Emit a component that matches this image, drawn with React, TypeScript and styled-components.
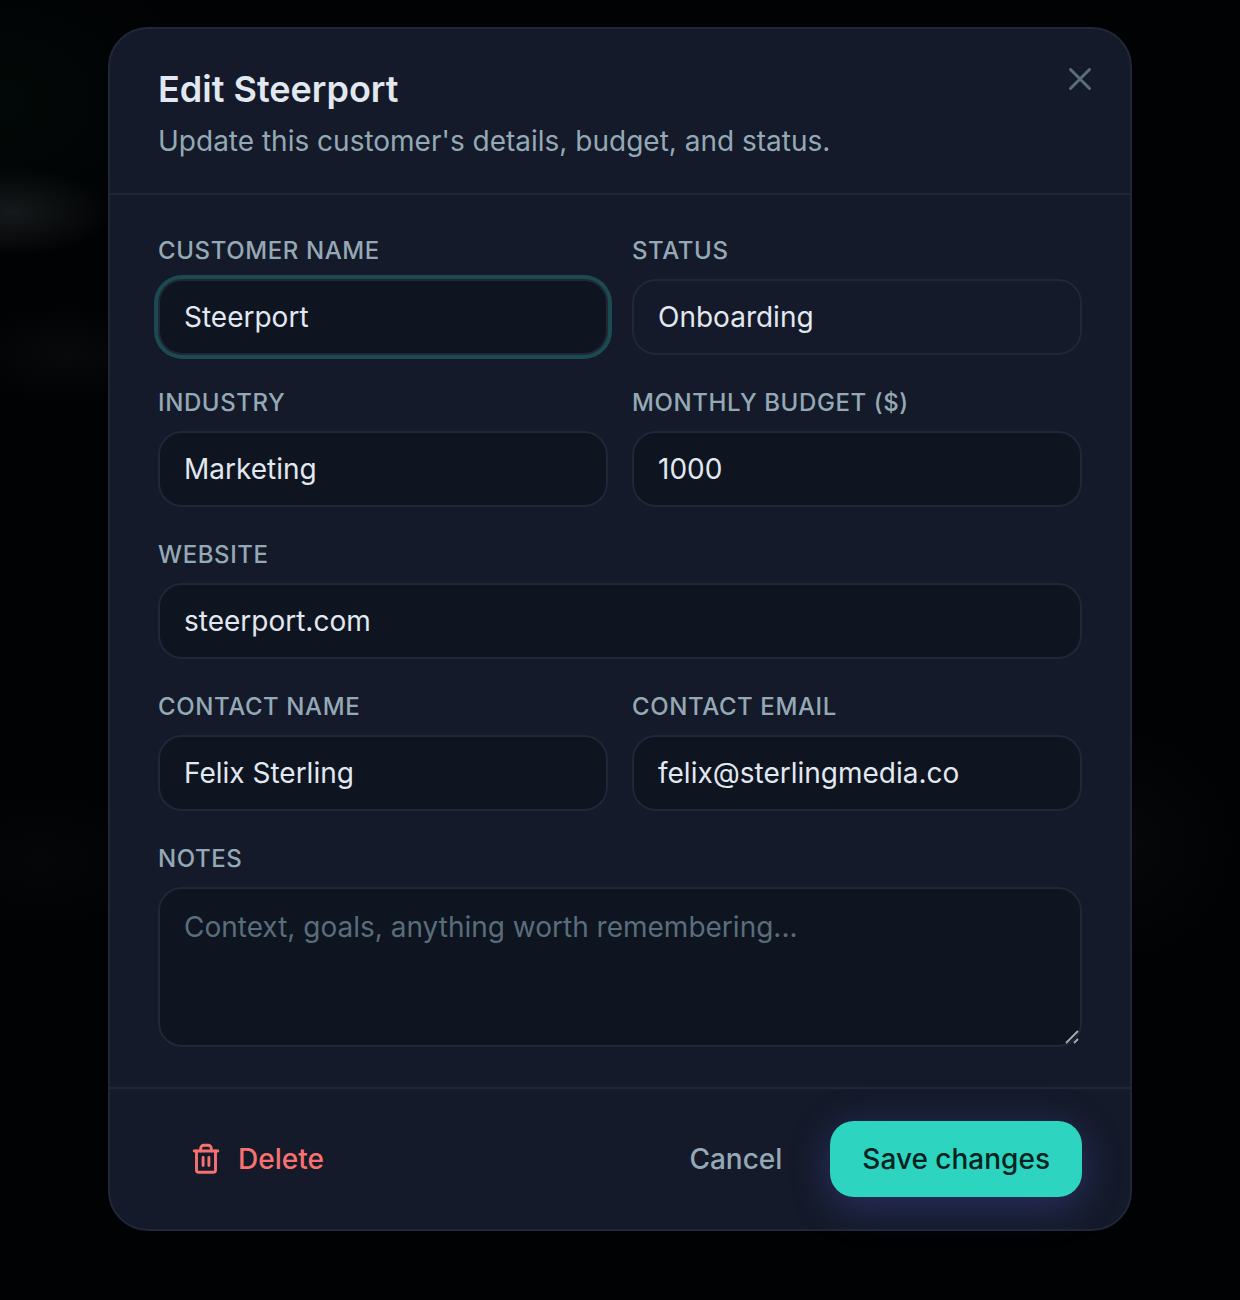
import React from "react";
import styled, { createGlobalStyle, css } from "styled-components";

const color = {
  panel: "#141a29",
  field: "#0e1420",
  line: "#1f2738",
  text: "#e2e8f0",
  label: "#94a9b5",
  muted: "#5a6d7b",
  accent: "#2dd5c1",
  onAccent: "#04231f",
  ring: "#1b4a50",
  danger: "#f87171",
};

const GlobalStyle = createGlobalStyle`
  *, *::before, *::after { box-sizing: border-box; }
  body {
    margin: 0;
    background: #010203;
    color: ${color.text};
    font-family: Inter, "Liberation Sans", sans-serif;
    font-size: 28px;
    line-height: 40px;
  }
  button, input, select, textarea { font: inherit; color: inherit; }
`;

const Backdrop = styled.div`
  min-height: 100vh;
  display: flex;
  justify-content: center;
  align-items: flex-start;
  padding: 27px 24px 69px;
  background:
    radial-gradient(ellipse 100px 44px at 10px 212px, #16191b, transparent),
    radial-gradient(ellipse 100px 50px at 65px 354px, #08090b, transparent),
    radial-gradient(ellipse 130px 70px at 40px 860px, #050607, transparent),
    radial-gradient(ellipse 110px 120px at 1130px 845px, #060709, transparent),
    radial-gradient(ellipse 220px 160px at 0 100px, #020807, transparent),
    #010203;
`;

const Dialog = styled.form`
  position: relative;
  width: 100%;
  max-width: 1024px;
  background: ${color.panel};
  border: 2px solid ${color.line};
  border-radius: 40px;
`;

const Header = styled.header`
  padding: 36px 48px 32px;
  border-bottom: 2px solid ${color.line};
`;

const Title = styled.h1`
  margin: 0 0 8px;
  font-size: 36px;
  line-height: 48px;
  font-weight: 600;
`;

const Subtitle = styled.p`
  margin: 0;
  color: ${color.label};
`;

const CloseButton = styled.button`
  position: absolute;
  top: 34px;
  right: 34px;
  display: flex;
  padding: 0;
  border: 0;
  background: none;
  color: ${color.muted};
  cursor: pointer;
`;

const Fields = styled.div`
  display: grid;
  grid-template-columns: repeat(2, minmax(0, 1fr));
  gap: 32px 24px;
  padding: 40px 48px;
`;

const Field = styled.div<{ $wide?: boolean }>`
  display: flex;
  flex-direction: column;
  gap: 12px;
  grid-column: ${(p) => (p.$wide ? "1 / -1" : "auto")};
`;

const Label = styled.label`
  font-size: 24px;
  line-height: 32px;
  font-weight: 500;
  letter-spacing: 0.025em;
  text-transform: uppercase;
  color: ${color.label};
`;

const control = css`
  display: block;
  width: 100%;
  margin: 0;
  padding: 16px 24px;
  border: 2px solid ${color.line};
  border-radius: 24px;
  background: ${color.field};
  outline: none;
  &:focus {
    box-shadow: 0 0 0 4px ${color.ring};
  }
  &::placeholder {
    color: ${color.muted};
    opacity: 1;
  }
`;

const Input = styled.input`
  ${control}
  height: 76px;
`;

const Select = styled.select`
  ${control}
  height: 76px;
  appearance: none;
  background: ${color.panel};
`;

const TextArea = styled.textarea`
  ${control}
  height: 160px;
  padding: 18px 24px;
  resize: vertical;
  &::-webkit-resizer {
    background: transparent;
  }
`;

const TextAreaBox = styled.div`
  position: relative;
`;

const Grip = styled.svg`
  position: absolute;
  right: 2px;
  bottom: 2px;
  pointer-events: none;
`;

const Footer = styled.footer`
  display: flex;
  align-items: center;
  justify-content: space-between;
  padding: 32px 48px;
  border-top: 2px solid ${color.line};
`;

const Actions = styled.div`
  display: flex;
  gap: 16px;
`;

const Button = styled.button<{ $kind: "danger" | "ghost" | "primary" }>`
  display: flex;
  align-items: center;
  gap: 16px;
  height: 76px;
  padding: 0 32px;
  border: 0;
  border-radius: 24px;
  background: none;
  font-weight: 500;
  cursor: pointer;
  color: ${(p) => (p.$kind === "danger" ? color.danger : color.label)};
  ${(p) =>
    p.$kind === "primary" &&
    css`
      background: ${color.accent};
      color: ${color.onAccent};
      box-shadow: 0 8px 40px rgba(99, 102, 241, 0.3);
    `}
`;

function CloseIcon() {
  return (
    <svg width="32" height="32" viewBox="0 0 32 32" fill="none" stroke="currentColor" strokeWidth="3" strokeLinecap="round" aria-hidden="true">
      <path d="M6.5 6.5 25.5 25.5M25.5 6.5 6.5 25.5" />
    </svg>
  );
}

function TrashIcon() {
  return (
    <svg width="32" height="32" viewBox="0 0 32 32" fill="none" stroke="currentColor" strokeWidth="2.9" strokeLinecap="round" strokeLinejoin="round" aria-hidden="true">
      <path d="M4.2 8H27.8" />
      <path d="M10.7 8V5.3a3 3 0 0 1 3-3h4.6a3 3 0 0 1 3 3V8" />
      <path d="M6.5 8V27.3a2 2 0 0 0 2 2H23.5a2 2 0 0 0 2-2V8" />
      <path d="M13.1 14.5V22.5M18.9 14.5V22.5" />
    </svg>
  );
}

export default function App() {
  return (
    <>
      <GlobalStyle />
      <Backdrop>
        <Dialog role="dialog" aria-labelledby="dialog-title" onSubmit={(e) => e.preventDefault()}>
          <Header>
            <Title id="dialog-title">Edit Steerport</Title>
            <Subtitle>Update this customer's details, budget, and status.</Subtitle>
            <CloseButton type="button" aria-label="Close">
              <CloseIcon />
            </CloseButton>
          </Header>
          <Fields>
            <Field>
              <Label htmlFor="customer">Customer name</Label>
              <Input id="customer" defaultValue="Steerport" autoFocus />
            </Field>
            <Field>
              <Label htmlFor="status">Status</Label>
              <Select id="status" defaultValue="Onboarding">
                <option>Onboarding</option>
              </Select>
            </Field>
            <Field>
              <Label htmlFor="industry">Industry</Label>
              <Input id="industry" defaultValue="Marketing" />
            </Field>
            <Field>
              <Label htmlFor="budget">Monthly budget ($)</Label>
              <Input id="budget" inputMode="numeric" defaultValue="1000" />
            </Field>
            <Field $wide>
              <Label htmlFor="website">Website</Label>
              <Input id="website" defaultValue="steerport.com" />
            </Field>
            <Field>
              <Label htmlFor="contact">Contact name</Label>
              <Input id="contact" defaultValue="Felix Sterling" />
            </Field>
            <Field>
              <Label htmlFor="email">Contact email</Label>
              <Input id="email" type="email" defaultValue="felix@sterlingmedia.co" />
            </Field>
            <Field $wide>
              <Label htmlFor="notes">Notes</Label>
              <TextAreaBox>
                <TextArea id="notes" placeholder="Context, goals, anything worth remembering..." />
                <Grip width="16" height="16" viewBox="0 0 16 16" fill="none" stroke="#a9abb0" strokeWidth="1.8" aria-hidden="true">
                  <path d="M2 14 14 2M10 14l4-4" />
                </Grip>
              </TextAreaBox>
            </Field>
          </Fields>
          <Footer>
            <Button type="button" $kind="danger">
              <TrashIcon />
              Delete
            </Button>
            <Actions>
              <Button type="button" $kind="ghost">Cancel</Button>
              <Button type="submit" $kind="primary">Save changes</Button>
            </Actions>
          </Footer>
        </Dialog>
      </Backdrop>
    </>
  );
}
